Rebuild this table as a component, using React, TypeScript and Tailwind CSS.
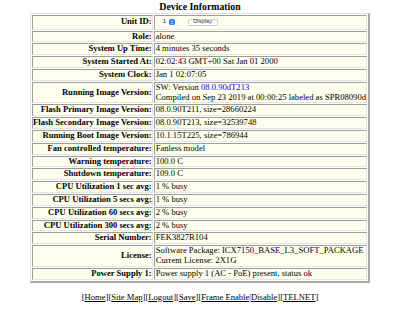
const rows: { label: string; value: React.ReactNode }[] = [
  { label: "Role:", value: "alone" },
  { label: "System Up Time:", value: "4 minutes 35 seconds" },
  { label: "System Started At:", value: "02:02:43 GMT+00 Sat Jan 01 2000" },
  { label: "System Clock:", value: "Jan 1 02:07:05" },
  {
    label: "Running Image Version:",
    value: (
      <>
        SW: Version <span className="text-[#0000ee]">08.0.90dT213</span>
        <br />
        Compiled on Sep 23 2019 at 00:00:25 labeled as SPR08090d
      </>
    ),
  },
  { label: "Flash Primary Image Version:", value: "08.0.90T211, size=28660224" },
  { label: "Flash Secondary Image Version:", value: "08.0.90T213, size=32539748" },
  { label: "Running Boot Image Version:", value: "10.1.15T225, size=786944" },
  { label: "Fan controlled temperature:", value: "Fanless model" },
  { label: "Warning temperature:", value: "100.0 C" },
  { label: "Shutdown temperature:", value: "109.0 C" },
  { label: "CPU Utilization 1 sec avg:", value: "1 % busy" },
  { label: "CPU Utilization 5 secs avg:", value: "1 % busy" },
  { label: "CPU Utilization 60 secs avg:", value: "2 % busy" },
  { label: "CPU Utilization 300 secs avg:", value: "2 % busy" },
  { label: "Serial Number:", value: "FEK3827R104" },
  {
    label: "License:",
    value: (
      <>
        Software Package: ICX7150_BASE_L3_SOFT_PACKAGE
        <br />
        Current License: 2X1G
      </>
    ),
  },
  { label: "Power Supply 1:", value: "Power supply 1 (AC - PoE) present, status ok" },
];

const cell =
  "border border-t-[#9c9c9c] border-l-[#9c9c9c] border-b-[#e4e4e4] border-r-[#e4e4e4] bg-[#ffffee] p-0 leading-[9.8px]";

const links = ["Home", "Site Map", "Logout", "Save", "Frame Enable|Disable", "TELNET"];

export default function App() {
  return (
    <div className="w-[400px] h-[321px] bg-white text-black font-['Liberation_Serif',serif] text-[8.6px]">
      <div className="h-[13px] pt-[2px] text-center font-bold text-[9.8px] leading-[10px]">
        Device Information
      </div>
      <table className="mx-auto border-separate border-spacing-[1px] border-t border-l border-r-2 border-b-2 border-t-[#dedede] border-l-[#dedede] border-r-[#a8a8a8] border-b-[#a8a8a8]">
        <tbody>
          <tr>
            <td className={`${cell} text-right font-bold whitespace-nowrap`}>Unit ID:</td>
            <td className={`${cell} pl-[1px]`}>
              <div className="flex items-center h-[12.7px] gap-[11px] pl-[2px]">
                <div className="flex items-center h-[8px] w-[19px] rounded-[2px] bg-white shadow-[0_0_1px_rgba(0,0,0,0.35)] pl-[5px] gap-[3px] font-['Liberation_Sans',sans-serif] text-[6px]">
                  <span>1</span>
                  <span className="flex flex-col items-center justify-center w-[5.5px] h-[6px] rounded-[1.5px] bg-[#2f7cf6]">
                    <svg width="4" height="5" viewBox="0 0 4 5">
                      <path d="M0.8 1.9 L2 0.8 L3.2 1.9 M0.8 3.1 L2 4.2 L3.2 3.1" stroke="white" strokeWidth="0.7" fill="none" />
                    </svg>
                  </span>
                </div>
                <div className="flex items-center justify-center h-[7.5px] w-[30px] rounded-[2px] bg-white border border-[#d0d0d0] font-['Liberation_Sans',sans-serif] text-[5.8px] text-[#333]">
                  Display
                </div>
              </div>
            </td>
          </tr>
          {rows.map((r) => (
            <tr key={r.label}>
              <td className={`${cell} text-right font-bold whitespace-nowrap`}>{r.label}</td>
              <td className={`${cell} pl-[1px] whitespace-nowrap`}>{r.value}</td>
            </tr>
          ))}
        </tbody>
      </table>
      <div className="mt-[9px] text-center leading-[10px]">
        {links.map((l) => (
          <a key={l} className="underline text-black">
            [{l}]
          </a>
        ))}
      </div>
    </div>
  );
}
